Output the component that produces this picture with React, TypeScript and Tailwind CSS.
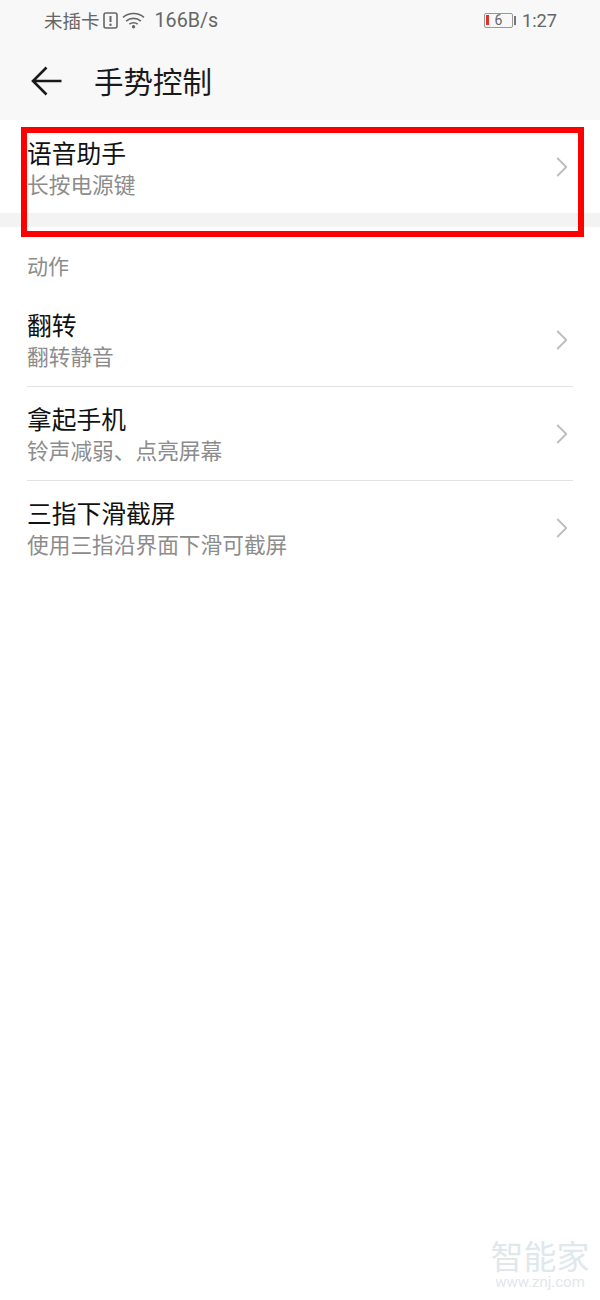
import { ChevronRight } from 'lucide-react';

const cjk = { fontFamily: '"Noto Sans CJK SC", "Roboto", sans-serif' };

const actions = [
  { title: '翻转', sub: '翻转静音' },
  { title: '拿起手机', sub: '铃声减弱、点亮屏幕' },
  { title: '三指下滑截屏', sub: '使用三指沿界面下滑可截屏' },
];

function Row({ title, sub, border }: { title: string; sub: string; border?: boolean }) {
  return (
    <div className={`flex h-[94px] items-center justify-between ${border ? 'border-b border-[#e3e3e3]' : ''}`}>
      <div>
        <p className="text-[24.75px] leading-[32px] text-[#111]">{title}</p>
        <p className="text-[21.7px] leading-[32px] text-[#8c8c8c]">{sub}</p>
      </div>
      <ChevronRight className="-mr-[6px] h-[34px] w-[34px] text-[#bdbdbd]" strokeWidth={1.3} />
    </div>
  );
}

export default function App() {
  return (
    <div className="relative h-[1300px] w-[600px] overflow-hidden bg-white" style={cjk}>
      <div className="h-[120px] bg-[#f8f8f8]">
        <div className="flex h-[41px] items-center justify-between pl-[44px] pr-[43px] text-[18.5px] text-[#666]">
          <div className="flex items-center">
            <span>未插卡</span>
            <svg className="ml-[3px]" width="15" height="17" viewBox="0 0 15 17" fill="none">
              <rect x="1" y="1" width="13" height="15" rx="2" stroke="#666" strokeWidth="1.6" />
              <path d="M7.5 4v6" stroke="#666" strokeWidth="2" />
              <circle cx="7.5" cy="12.7" r="1.2" fill="#666" />
            </svg>
            <svg className="ml-[4px]" width="23" height="18" viewBox="0 0 22 17" fill="none">
              <path d="M1 6c5.500-5 14.500-5 20 0M4 9.500c3.800-3.400 10.200-3.400 14 0M7 12.500c2.200-1.800 5.800-1.800 8 0" stroke="#666" strokeWidth="1.5" />
              <circle cx="11" cy="15" r="1.600" fill="#666" />
            </svg>
            <span className="ml-[10px] text-[19.7px]" style={{ fontFamily: 'Roboto, sans-serif' }}>166B/s</span>
          </div>
          <div className="flex items-center">
            <div className="flex h-[15px] w-[29px] items-center rounded-[2px] border border-[#999] pl-[1.5px]">
              <div className="h-[10px] w-[3px] bg-[#e0312b]" />
              <span className="ml-[5px] text-[14px] leading-none" style={{ fontFamily: 'Roboto, sans-serif' }}>6</span>
            </div>
            <div className="ml-[1px] h-[9px] w-[2px] bg-[#777]" />
            <span className="ml-[6px] text-[18.2px]" style={{ fontFamily: 'Roboto, sans-serif' }}>1:27</span>
          </div>
        </div>
        <div className="flex h-[79px] items-center pl-[31px]">
          <svg width="32" height="30" viewBox="0 0 32 30" fill="none" stroke="#1a1a1a" strokeWidth="2.6">
            <path d="M30.500 15H2M15.500 1.500 2 15l13.500 13.500" />
          </svg>
          <h1 className="ml-[31px] text-[29.5px] font-normal text-[#1a1a1a]">手势控制</h1>
        </div>
      </div>

      <div className="px-[27px]">
        <div className="flex h-[93px] items-start justify-between pt-[16px]">
          <div>
            <p className="text-[24.75px] leading-[32px] text-[#111]">语音助手</p>
            <p className="text-[21.7px] leading-[32px] text-[#8c8c8c]">长按电源键</p>
          </div>
          <ChevronRight className="-mr-[6px] mt-[14px] h-[34px] w-[34px] text-[#bdbdbd]" strokeWidth={1.3} />
        </div>
      </div>
      <div className="h-[14px] bg-[#f3f3f3]" />

      <div className="px-[27px]">
        <p className="pt-[23px] text-[21px] leading-[30px] text-[#8c8c8c]">动作</p>
        <div className="mt-[13px]">
          {actions.map((item, i) => (
            <Row key={item.title} title={item.title} sub={item.sub} border={i < actions.length - 1} />
          ))}
        </div>
      </div>

      <div className="absolute left-[21px] top-[127px] h-[110px] w-[563px] border-[6px] border-[#fe0000]" />

      <div className="absolute left-[489px] top-[1236px] w-[102px] text-center text-[#dfe8ea]">
        <p className="text-[33px] leading-[38px]">智能家</p>
        <p className="mt-[-1px] text-[15px] leading-[18px]" style={{ fontFamily: 'Roboto, sans-serif' }}>www.znj.com</p>
      </div>
    </div>
  );
}
